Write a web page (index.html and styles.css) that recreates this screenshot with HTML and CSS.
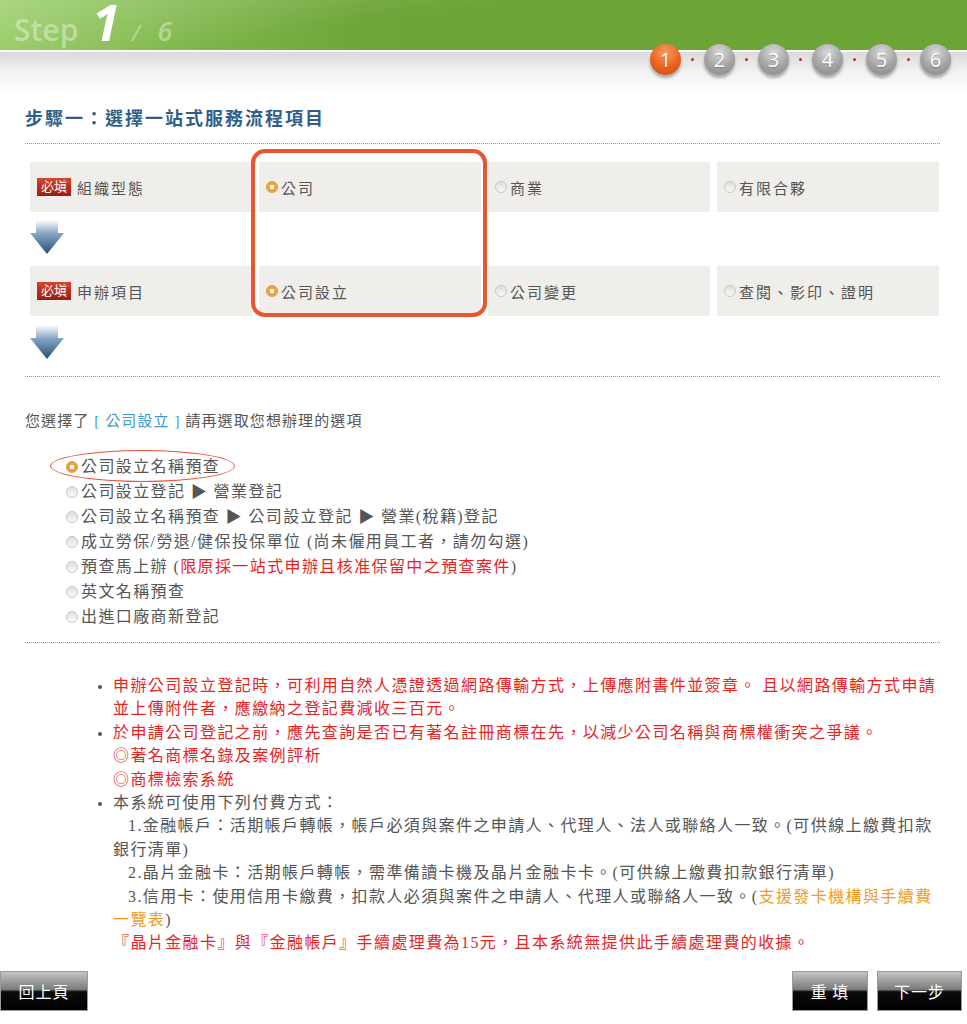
FILE: index.html
```html
<!doctype html>
<html lang="zh-Hant">
    <head>
        <meta charset="UTF-8">
        <meta name="viewport" content="width=device-width, initial-scale=1.0">
        <title>一站式服務 - Step 1</title>
        <link rel="stylesheet" href="styles.css">
    </head>
    <body>
        <header class="banner">
            <div class="banner-green">
                <span class="step-word">Step</span>
                <span class="step-now">1</span>
                <span class="step-slash">/</span>
                <span class="step-all">6</span>
            </div>
            <ol class="step-track">
                <li class="step-dot current">1</li>
                <li class="step-gap"></li>
                <li class="step-dot">2</li>
                <li class="step-gap"></li>
                <li class="step-dot">3</li>
                <li class="step-gap"></li>
                <li class="step-dot">4</li>
                <li class="step-gap"></li>
                <li class="step-dot">5</li>
                <li class="step-gap"></li>
                <li class="step-dot">6</li>
            </ol>
        </header>

        <main class="content">
            <h1 class="section-title">步驟一：選擇一站式服務流程項目</h1>
            <div class="rule"></div>

            <div class="flow">
                <div class="flow-cell"><span class="badge">必塡</span>組織型態</div>
                <div class="flow-cell"><span class="radio checked"></span>公司</div>
                <div class="flow-cell"><span class="radio"></span>商業</div>
                <div class="flow-cell"><span class="radio"></span>有限合夥</div>
                <div class="flow-arrow">
                    <svg width="34" height="34" viewBox="0 0 34 34">
                        <defs>
                            <linearGradient id="arrow-a" x1="0" y1="0" x2="0" y2="1">
                                <stop offset="0" stop-color="#ffffff"/>
                                <stop offset="0.4" stop-color="#86a5c2"/>
                                <stop offset="1" stop-color="#234f7b"/>
                            </linearGradient>
                        </defs>
                        <path d="M6 0H28V13H34L17 34L0 13H6Z" fill="url(#arrow-a)"/>
                    </svg>
                </div>
                <div class="flow-cell"><span class="badge">必塡</span>申辦項目</div>
                <div class="flow-cell"><span class="radio checked"></span>公司設立</div>
                <div class="flow-cell"><span class="radio"></span>公司變更</div>
                <div class="flow-cell"><span class="radio"></span>查閱、影印、證明</div>
                <div class="flow-arrow second">
                    <svg width="34" height="34" viewBox="0 0 34 34">
                        <path d="M6 0H28V13H34L17 34L0 13H6Z" fill="url(#arrow-a)"/>
                    </svg>
                </div>
                <div class="flow-highlight"></div>
            </div>
            <div class="rule"></div>

            <p class="choice-note">您選擇了 <span class="chosen">[ 公司設立 ]</span> 請再選取您想辦理的選項</p>
            <ul class="option-list">
                <li><span class="circle-mark"></span><span class="radio checked"></span>公司設立名稱預查</li>
                <li><span class="radio"></span>公司設立登記 ▶ 營業登記</li>
                <li><span class="radio"></span>公司設立名稱預查 ▶ 公司設立登記 ▶ 營業(稅籍)登記</li>
                <li><span class="radio"></span>成立勞保/勞退/健保投保單位 (尚未僱用員工者，請勿勾選)</li>
                <li><span class="radio"></span>預查馬上辦 (<span class="alert">限原採一站式申辦且核准保留中之預查案件</span>)</li>
                <li><span class="radio"></span>英文名稱預查</li>
                <li><span class="radio"></span>出進口廠商新登記</li>
            </ul>
            <div class="rule"></div>

            <ul class="notes">
                <li><span class="alert">申辦公司設立登記時，可利用自然人憑證透過網路傳輸方式，上傳應附書件並簽章。 且以網路傳輸方式申請並上傳附件者，應繳納之登記費減收三百元。</span></li>
                <li><span class="alert">於申請公司登記之前，應先查詢是否已有著名註冊商標在先，以減少公司名稱與商標權衝突之爭議。<br>◎著名商標名錄及案例評析<br>◎商標檢索系統</span></li>
                <li>本系統可使用下列付費方式：<br>
                    <span class="indent"></span>1.金融帳戶：活期帳戶轉帳，帳戶必須與案件之申請人、代理人、法人或聯絡人一致。(可供線上繳費扣款銀行清單)<br>
                    <span class="indent"></span>2.晶片金融卡：活期帳戶轉帳，需準備讀卡機及晶片金融卡卡。(可供線上繳費扣款銀行清單)<br>
                    <span class="indent"></span>3.信用卡：使用信用卡繳費，扣款人必須與案件之申請人、代理人或聯絡人一致。(<span class="link">支援發卡機構與手續費一覽表</span>)<br>
                    <span class="alert">『晶片金融卡』與『金融帳戶』手續處理費為15元，且本系統無提供此手續處理費的收據。</span>
                </li>
            </ul>
        </main>

        <footer class="actions">
            <button class="btn btn-back" type="button">回上頁</button>
            <div class="actions-right">
                <button class="btn btn-reset" type="reset">重 填</button>
                <button class="btn btn-next" type="submit">下一步</button>
            </div>
        </footer>
    </body>
</html>
```

FILE: styles.css
```css
body {
    margin: 0;
    font-family: "Liberation Serif", "Noto Sans CJK TC", serif;
    color: #555;
    background: #fff;
}

/* banner */

.banner {
    height: 95px;
    background: linear-gradient(to bottom, #dcdcdc 54px, #f2f2f2 72px, #fff 95px);
}

.banner-green {
    display: flex;
    align-items: baseline;
    height: 52px;
    box-sizing: border-box;
    padding-left: 14px;
    border-bottom: 2px solid #fff;
    font-family: "Open Sans", sans-serif;
    background:
        linear-gradient(172deg, rgba(255,255,255,.22) 0%, rgba(255,255,255,0) 40%),
        linear-gradient(to right, #93ca60 0%, #6ea438 38%, #6ba435 100%);
}

.step-word {
    font-size: 30px;
    font-weight: 600;
    line-height: 36px;
    color: rgba(255,255,255,.38);
}

.step-now {
    margin-left: 14px;
    font-size: 50px;
    font-weight: 700;
    font-style: italic;
    line-height: 44px;
    color: #fff;
}

.step-slash {
    margin-left: 12px;
    font-size: 22px;
    font-style: italic;
    color: rgba(255,255,255,.4);
}

.step-all {
    margin-left: 18px;
    font-size: 27px;
    font-weight: 600;
    font-style: italic;
    color: rgba(255,255,255,.4);
}

.step-track {
    display: flex;
    justify-content: flex-end;
    align-items: center;
    height: 31px;
    margin: -8px 0 0;
    padding: 0 16px 0 0;
    list-style: none;
}

.step-dot {
    display: flex;
    align-items: center;
    justify-content: center;
    width: 31px;
    height: 31px;
    border-radius: 50%;
    font-family: "Open Sans", sans-serif;
    font-size: 20px;
    color: #fff;
    text-shadow: 0 1px 1px rgba(0,0,0,.25);
    background: radial-gradient(circle at 50% 28%, #dadada 0%, #a3a3a3 55%, #858585 100%);
    box-shadow: 0 3px 3px rgba(0,0,0,.3);
}

.step-dot.current {
    background: radial-gradient(circle at 50% 28%, #fb9b60 0%, #e8621f 55%, #c94a12 100%);
}

.step-gap {
    display: flex;
    justify-content: center;
    width: 23px;
}

.step-gap::before {
    content: "";
    width: 3px;
    height: 3px;
    border-radius: 50%;
    background: #a3352b;
}

/* content */

.content {
    padding: 0 27px 0 25px;
}

.section-title {
    margin: 12px 0 12px;
    font-size: 18px;
    font-weight: 700;
    line-height: 24px;
    letter-spacing: 2px;
    color: #2f5e8a;
}

.rule {
    border-top: 1px dotted #8399b2;
}

.flow {
    position: relative;
    display: grid;
    grid-template-columns: repeat(4, 222px);
    grid-template-rows: 50px 54px 50px 60px;
    column-gap: 7px;
    margin: 18px 0 0 5px;
}

.flow-cell {
    display: flex;
    align-items: center;
    padding-left: 7px;
    background: #f0eeea;
    font-size: 15px;
    letter-spacing: 2px;
    color: #555;
}

.flow-arrow {
    grid-column: 1 / -1;
    padding-top: 8px;
}

.flow-arrow.second {
    padding-top: 9px;
}

.flow-arrow svg {
    display: block;
}

.flow-highlight {
    position: absolute;
    left: 221px;
    top: -13px;
    width: 236px;
    height: 168px;
    box-sizing: border-box;
    border: 4px solid #ea5530;
    border-radius: 14px;
    pointer-events: none;
}

.badge {
    display: inline-block;
    width: 34px;
    height: 18px;
    margin-right: 6px;
    font-size: 13px;
    line-height: 18px;
    letter-spacing: 0;
    text-align: center;
    color: #fff;
    background: linear-gradient(to bottom, #d6442d, #9b1c12);
}

.radio {
    display: inline-block;
    width: 12px;
    height: 12px;
    margin-right: 3px;
    box-sizing: border-box;
    border: 1px solid #c6c6c6;
    border-radius: 50%;
    vertical-align: -1px;
    background: linear-gradient(to bottom, #dedede, #fafafa);
}

.radio.checked {
    border-color: #e39a32;
    background: radial-gradient(circle, #fff 0 2px, #eaa43e 2.6px);
}

.choice-note {
    margin: 32px 0 0;
    font-size: 15px;
    line-height: 24px;
    letter-spacing: 1.1px;
}

.chosen {
    color: #3a98cc;
}

.option-list {
    margin: 21px 0 13px;
    padding-left: 41px;
    list-style: none;
    font-size: 16px;
    line-height: 25px;
    letter-spacing: 1.4px;
}

.option-list li {
    position: relative;
}

.circle-mark {
    position: absolute;
    left: -16px;
    top: -4px;
    width: 185px;
    height: 32px;
    box-sizing: border-box;
    border: 1.5px solid #e8553a;
    border-radius: 50%;
}

.alert {
    color: #e8231f;
}

.link {
    color: #f39a1e;
}

.notes {
    margin: 31px 0 0;
    padding-left: 88px;
    font-size: 16px;
    line-height: 23.4px;
    letter-spacing: 1.4px;
}

.notes li::marker {
    color: #555;
    font-size: 14px;
}

.indent {
    display: inline-block;
    width: 15px;
}

/* footer buttons */

.actions {
    display: flex;
    justify-content: space-between;
    margin-top: 16px;
    padding-right: 5px;
}

.actions-right {
    display: flex;
    gap: 9px;
}

.btn {
    height: 40px;
    padding: 0;
    border: 1px solid #9a9a9a;
    font-family: "Noto Sans CJK TC", sans-serif;
    font-size: 16px;
    letter-spacing: 1px;
    color: #fff;
    background: linear-gradient(to bottom, #c4c4c4 0%, #7a7a7a 46%, #0c0c0c 52%, #000 100%);
    cursor: pointer;
}

.btn-back {
    width: 88px;
}

.btn-reset {
    width: 76px;
}

.btn-next {
    width: 85px;
}
```
